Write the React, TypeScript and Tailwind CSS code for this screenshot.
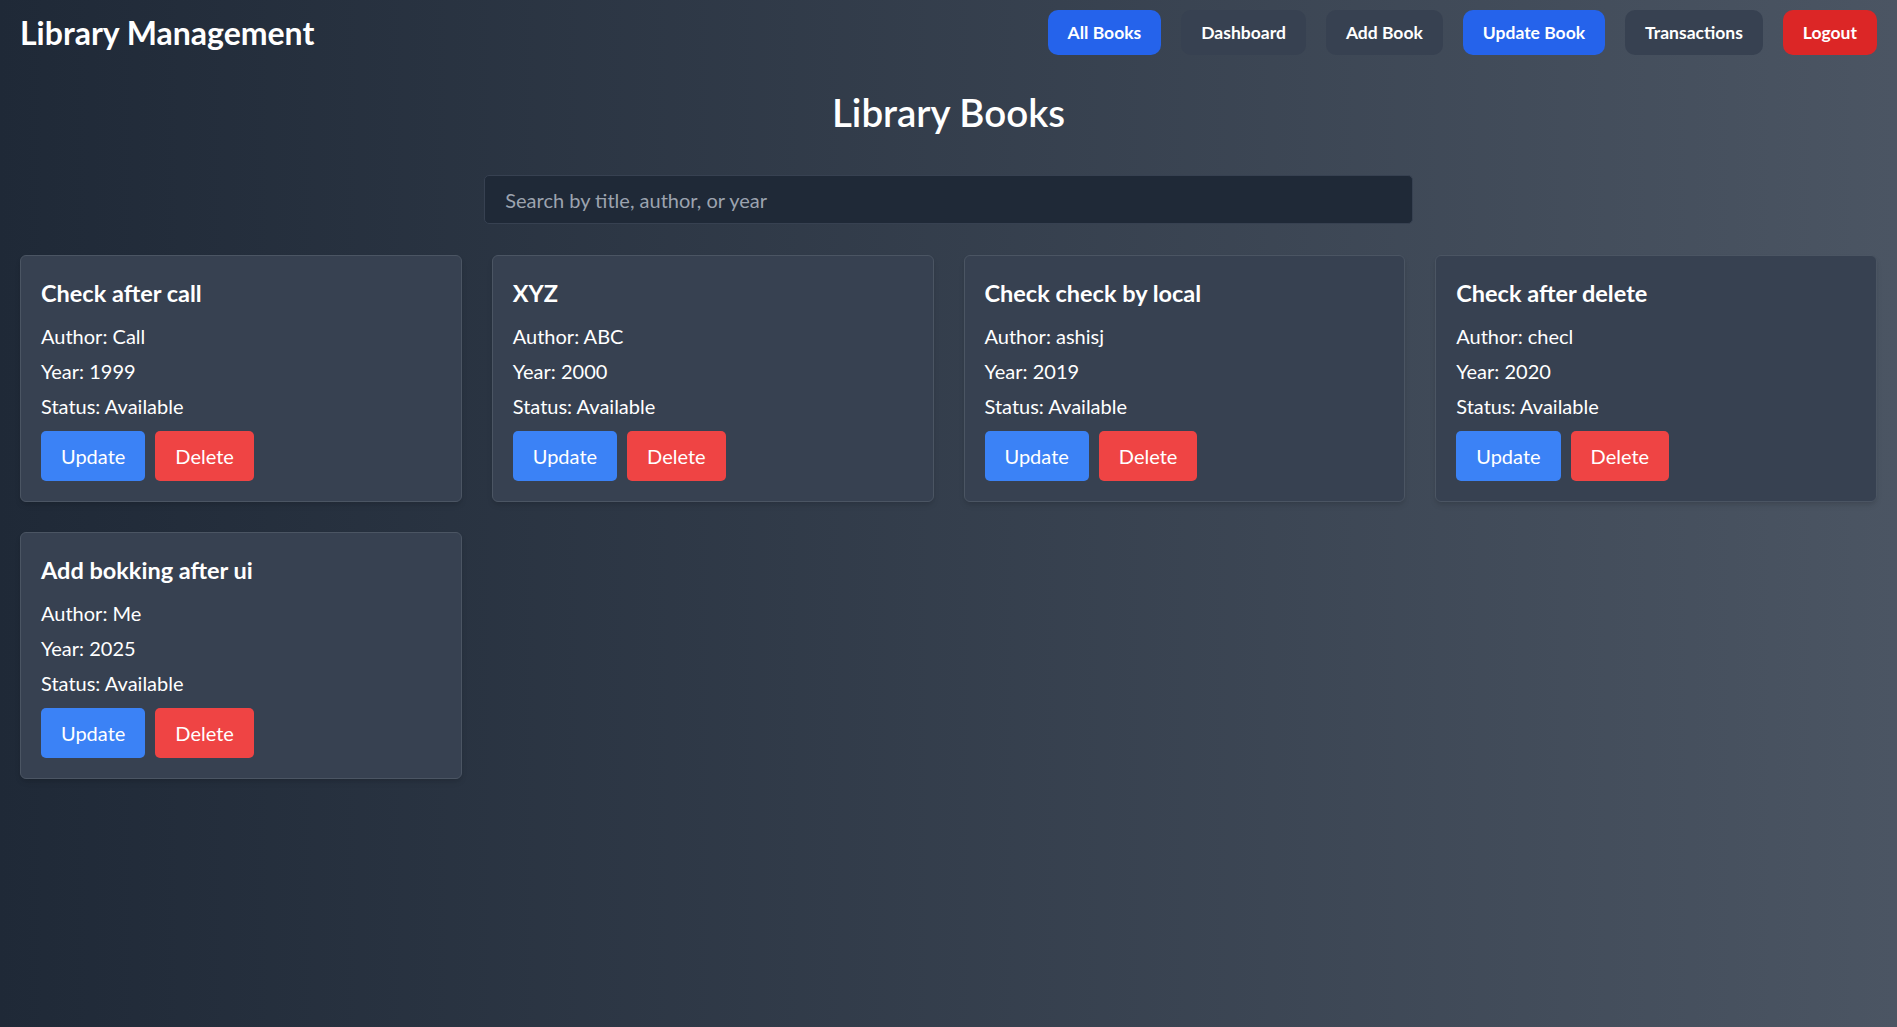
import { useState } from "react";

interface Book {
  id: number;
  title: string;
  author: string;
  year: number;
  status: string;
}

const books: Book[] = [
  { id: 1, title: "Check after call", author: "Call", year: 1999, status: "Available" },
  { id: 2, title: "XYZ", author: "ABC", year: 2000, status: "Available" },
  { id: 3, title: "Check check by local", author: "ashisj", year: 2019, status: "Available" },
  { id: 4, title: "Check after delete", author: "checl", year: 2020, status: "Available" },
  { id: 5, title: "Add bokking after ui", author: "Me", year: 2025, status: "Available" },
];

const navItems = [
  { label: "All Books", className: "bg-[#2563eb]" },
  { label: "Dashboard", className: "bg-[#374151]" },
  { label: "Add Book", className: "bg-[#374151]" },
  { label: "Update Book", className: "bg-[#2563eb]" },
  { label: "Transactions", className: "bg-[#374151]" },
  { label: "Logout", className: "bg-[#dc2626]" },
];

function Navbar() {
  return (
    <header className="flex items-center justify-between px-[20px] py-[10px]">
      <h1 className="text-[32px] leading-[40px] font-bold text-white">
        Library Management
      </h1>
      <nav className="flex items-center gap-[20px]">
        {navItems.map((item) => (
          <button
            key={item.label}
            className={`${item.className} text-white text-[17.5px] leading-[25px] font-bold px-[20px] py-[10px] rounded-[10px]`}
          >
            {item.label}
          </button>
        ))}
      </nav>
    </header>
  );
}

function BookCard({ book }: { book: Book }) {
  return (
    <div className="bg-[#374151] border border-[#4b5563] rounded-[6px] p-[20px] shadow-md">
      <h2 className="text-[23.5px] leading-[35px] font-bold text-white mb-[10px]">
        {book.title}
      </h2>
      <p className="text-[20px] leading-[30px] text-white mb-[5px]">
        Author: {book.author}
      </p>
      <p className="text-[20px] leading-[30px] text-white mb-[5px]">
        Year: {book.year}
      </p>
      <p className="text-[20px] leading-[30px] text-white">
        Status: {book.status}
      </p>
      <div className="flex gap-[10px] mt-[10px]">
        <button className="bg-[#3b82f6] text-white text-[20px] leading-[30px] px-[20px] py-[10px] rounded-[5px]">
          Update
        </button>
        <button className="bg-[#ef4444] text-white text-[20px] leading-[30px] px-[20px] py-[10px] rounded-[5px]">
          Delete
        </button>
      </div>
    </div>
  );
}

export default function App() {
  const [query, setQuery] = useState("");

  const filtered = books.filter((b) => {
    const q = query.toLowerCase();
    return (
      b.title.toLowerCase().includes(q) ||
      b.author.toLowerCase().includes(q) ||
      String(b.year).includes(q)
    );
  });

  return (
    <div className="min-h-screen bg-gradient-to-r from-[#1f2937] to-[#4b5563] text-white font-['Lato','Noto_Sans',sans-serif]">
      <Navbar />
      <main className="px-[20px] pb-[20px]">
        <h1 className="text-center text-[38.5px] leading-[45px] font-semibold text-white mt-[25px] mb-[40px]">
          Library Books
        </h1>
        <input
          type="text"
          value={query}
          onChange={(e) => setQuery(e.target.value)}
          placeholder="Search by title, author, or year"
          className="block w-1/2 mx-auto h-[49px] px-[20px] bg-[#1f2937] border border-[#374151] rounded-[5px] text-[20px] text-white placeholder-[#9ca3af] outline-none"
        />
        <div className="grid grid-cols-4 gap-[30px] mt-[31px]">
          {filtered.map((book) => (
            <BookCard key={book.id} book={book} />
          ))}
        </div>
      </main>
    </div>
  );
}
